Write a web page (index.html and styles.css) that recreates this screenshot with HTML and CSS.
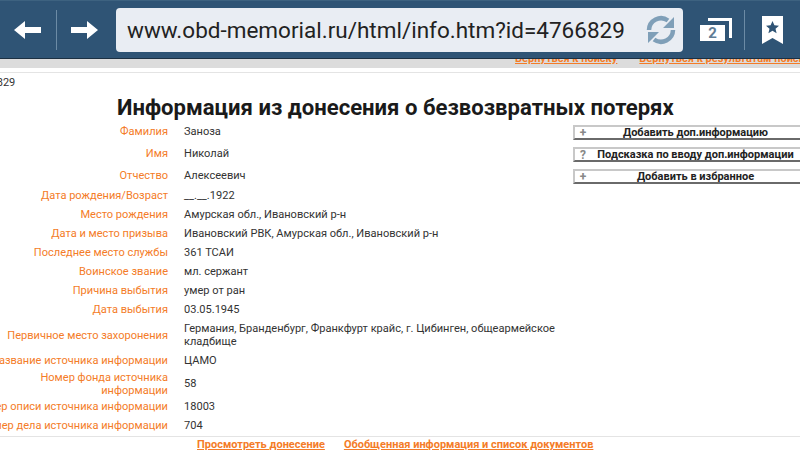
FILE: index.html
```html
<!DOCTYPE html>
<html lang="ru">
<head>
<meta charset="utf-8">
<title>Информация из донесения</title>
<link rel="stylesheet" href="styles.css">
</head>
<body>
<header class="toolbar">
  <svg class="icon back" width="28" height="20" viewBox="0 0 28 20"><path d="M0 10 11 1v6h16v6H11v6z" fill="#fff"/></svg>
  <div class="divider first"></div>
  <svg class="icon forward" width="28" height="20" viewBox="0 0 28 20"><path d="M27 10 16 1v6H0v6h16v6z" fill="#fff"/></svg>
  <div class="urlbar">
    <span class="url">www.obd-memorial.ru/html/info.htm?id=4766829</span>
    <svg class="refresh" width="30" height="30" viewBox="0 0 30 30"><g fill="none" stroke="#7f9fb8" stroke-width="4.500"><path d="M3 15a12 12 0 0 1 19-9.500"/><path d="M27 15a12 12 0 0 1-19 9.500"/></g><path d="M28 2v11H17zM2 28V17h11z" fill="#7f9fb8"/></svg>
  </div>
  <div class="tabs">
    <svg class="tabs-back" width="34" height="26" viewBox="0 0 34 26"><path d="M8 3.500h22.500V22" fill="none" stroke="#fff" stroke-width="3"/></svg>
    <span class="tabs-count">2</span>
  </div>
  <div class="divider"></div>
  <svg class="bookmark" width="22" height="28" viewBox="0 0 22 28"><path d="M0 0h21v28l-10.500-6L0 28z" fill="#fff"/><path d="m10.500 5 1.900 4.300 4.600.4-3.500 3 1.100 4.500-4.100-2.400-4.100 2.400 1.100-4.500-3.500-3 4.600-.4z" fill="#2f5475"/></svg>
</header>
<div class="strip">
  <div class="strip-links"><a href="#">Вернуться к поиску</a><a href="#">Вернуться к результатам поиска</a></div>
</div>
<main class="page">
  <div class="crumb">4766829</div>
  <h1 class="title">Информация из донесения о безвозвратных потерях</h1>
  <div class="content">
    <div class="records">
      <div class="row tall"><span class="label">Фамилия</span><span class="value">Заноза</span></div>
      <div class="row tall"><span class="label">Имя</span><span class="value">Николай</span></div>
      <div class="row tall"><span class="label">Отчество</span><span class="value">Алексеевич</span></div>
      <div class="row"><span class="label">Дата рождения/Возраст</span><span class="value">__.__.1922</span></div>
      <div class="row"><span class="label">Место рождения</span><span class="value">Амурская обл., Ивановский р-н</span></div>
      <div class="row"><span class="label">Дата и место призыва</span><span class="value">Ивановский РВК, Амурская обл., Ивановский р-н</span></div>
      <div class="row"><span class="label">Последнее место службы</span><span class="value">361 ТСАИ</span></div>
      <div class="row"><span class="label">Воинское звание</span><span class="value">мл. сержант</span></div>
      <div class="row"><span class="label">Причина выбытия</span><span class="value">умер от ран</span></div>
      <div class="row"><span class="label">Дата выбытия</span><span class="value">03.05.1945</span></div>
      <div class="row burial"><span class="label">Первичное место захоронения</span><span class="value">Германия, Бранденбург, Франкфурт крайс, г. Цибинген, общеармейское кладбище</span></div>
      <div class="row"><span class="label">Название источника информации</span><span class="value">ЦАМО</span></div>
      <div class="row fund"><span class="label">Номер фонда источника информации</span><span class="value">58</span></div>
      <div class="row"><span class="label">Номер описи источника информации</span><span class="value">18003</span></div>
      <div class="row"><span class="label">Номер дела источника информации</span><span class="value">704</span></div>
    </div>
    <div class="actions">
      <div class="action"><span class="mark">+</span><span class="action-text">Добавить доп.информацию</span></div>
      <div class="action"><span class="mark">?</span><span class="action-text">Подсказка по вводу доп.информации</span></div>
      <div class="action"><span class="mark">+</span><span class="action-text">Добавить в избранное</span></div>
    </div>
  </div>
  <nav class="footer-links"><a href="#">Просмотреть донесение</a><a href="#">Обобщенная информация и список документов</a></nav>
</main>
</body>
</html>
```

FILE: styles.css
```css
* { box-sizing: border-box; }
html, body { margin: 0; padding: 0; width: 800px; height: 450px; overflow: hidden; background: #fff; }
body { font-family: Roboto, "Liberation Sans", sans-serif; color: #333; }

.toolbar { display: flex; align-items: center; height: 59px; background: #2f5475; border-bottom: 1px solid #1c3042; border-top: 1px solid #3d6280; }
.icon { flex: none; }
.back { margin-left: 14px; }
.divider { flex: none; width: 1px; height: 40px; background: #6c8ba5; }
.divider.first { margin-left: 14px; }
.forward { margin-left: 14px; }
.urlbar { flex: none; display: flex; align-items: center; justify-content: space-between; width: 567px; height: 44px; margin-left: 17px; padding: 0 7px 0 11px; background: #e9edf3; border-radius: 4px; }
.url { font-size: 22.500px; color: #222; white-space: nowrap; }
.tabs { flex: none; position: relative; width: 34px; height: 28px; margin-left: 17px; }
.tabs-back { position: absolute; left: 0; top: 0; }
.tabs-count { position: absolute; left: 0; top: 9px; width: 25px; height: 16px; background: #fff; color: #5f7c95; font-size: 15px; font-weight: 700; line-height: 16px; text-align: center; }
.tabs + .divider { margin-left: 10px; }
.bookmark { flex: none; margin-left: 17px; }

.strip { height: 9px; overflow: hidden; background: #dcdcdc; }
.strip-links { display: flex; gap: 22px; margin: -7px 0 0 515px; width: 400px; white-space: nowrap; }
.strip-links a { color: #f47c28; font-size: 11px; font-weight: 700; line-height: 14px; }

.page { width: 840px; margin-left: -40px; margin-top: 4px; border-top: 1px solid #e4e4e4; }
.crumb { padding: 3px 0 0 12px; height: 17px; font-size: 11px; line-height: 13px; color: #333; }
.title { margin: 4px 0 0; padding-left: 157px; font-size: 22.100px; line-height: 26px; font-weight: 700; color: #1a1a1a; white-space: nowrap; }

.content { display: flex; }
.records { flex: none; width: 600px; }
.row { display: grid; grid-template-columns: 208px 1fr; column-gap: 16px; align-items: center; min-height: 19px; font-size: 11.050px; line-height: 13px; }
.row.tall { min-height: 22px; }
.row.burial { min-height: 32px; }
.row.fund { min-height: 27px; }
.label { text-align: right; color: #f47c28; justify-self: end; }
.row.fund .label { max-width: 130px; }
.value { color: #333; max-width: 376px; }

.actions { flex: none; display: flex; flex-direction: column; gap: 7px; width: 240px; margin: 5px 0 0 13px; }
.action { display: flex; align-items: center; height: 15px; padding-right: 13px; border: 2px solid #c8c8c8; border-bottom-color: #6a6a6a; border-right: 0; font-size: 11px; font-weight: 700; color: #222; }
.mark { flex: none; width: 16px; text-align: center; font-size: 12px; color: #888; }
.action-text { flex: 1; text-align: center; white-space: nowrap; }

.footer-links { display: flex; gap: 19px; margin-top: 1px; padding: 1px 0 0 237px; border-top: 1px solid #e4e4e4; font-size: 11px; line-height: 13px; font-weight: 700; }
.footer-links a { color: #f47c28; }
```
